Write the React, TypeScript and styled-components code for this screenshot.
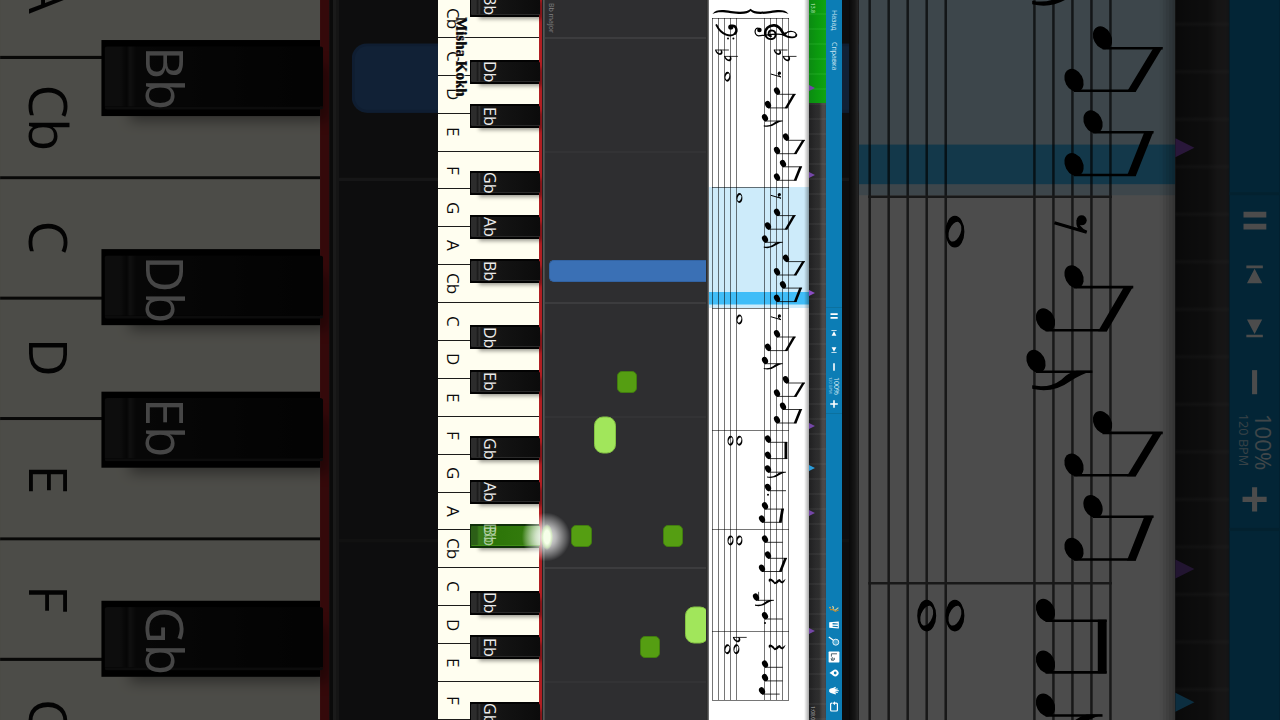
import React from "react";
import styled, { createGlobalStyle, css } from "styled-components";

const GlobalStyle = createGlobalStyle`
  * { box-sizing: border-box; }
  body { margin: 0; background: #000; }
  button { appearance: none; border: 0; margin: 0; padding: 0; background: none; color: inherit; font: inherit; }
`;

const UI_FONT = '"Open Sans", "Noto Sans", sans-serif';
const WHITE_KEYS = ["Cb", "C", "D", "E", "F", "G", "A", "Cb", "C", "D", "E", "F", "G", "A", "Cb", "C", "D", "E", "F"];

/* Distance from the top edge, counted in white keys. */
const BLACK_KEYS: { label: string; at: number; pressed?: boolean }[] = [
  { label: "Bb", at: 0.13 },
  { label: "Db", at: 1.9 },
  { label: "Eb", at: 3.07 },
  { label: "Gb", at: 4.83 },
  { label: "Ab", at: 5.99 },
  { label: "Bb", at: 7.15 },
  { label: "Db", at: 8.9 },
  { label: "Eb", at: 10.07 },
  { label: "Gb", at: 11.83 },
  { label: "Ab", at: 12.99 },
  { label: "Bb", at: 14.15, pressed: true },
  { label: "Db", at: 15.9 },
  { label: "Eb", at: 17.07 },
  { label: "Gb", at: 18.83 },
];

const keyTop = (at: number) => `${(at / 19) * 100}%`;

const Page = styled.main`
  position: relative;
  height: 100vh;
  overflow: hidden;
  display: flex;
  justify-content: center;
  font-family: ${UI_FONT};
`;

const Backdrop = styled.div`
  position: absolute;
  inset: 0;
  display: flex;
  justify-content: center;
  transform: scale(3.168);
`;

const Shade = styled.div`
  position: absolute;
  inset: 0;
  background: rgba(0, 0, 0, 0.7);
`;

const Video = styled.div`
  position: relative;
  height: 100%;
`;

const SceneRow = styled.div`
  height: 100%;
  aspect-ratio: 404 / 720;
  display: flex;
  overflow: hidden;
`;

const Keyboard = styled.div`
  position: relative;
  flex: 0 0 104px;
  display: flex;
  flex-direction: column;
  background: #fffef0;
  border-right: 3px solid #b01e22;
`;

const WhiteKey = styled.button`
  flex: 1 1 0;
  min-height: 0;
  display: flex;
  align-items: center;
  padding-left: 3px;
  background: #fffef0;
  border-bottom: 1px solid #1c1c1a;
  color: #0c0c0c;
`;

const KeyLabel = styled.span<{ $small?: boolean }>`
  position: relative;
  writing-mode: vertical-rl;
  font-family: ${UI_FONT};
  font-size: ${(p) => (p.$small ? 16 : 17)}px;
  line-height: 24px;
`;

const BlackKey = styled.button<{ $at: number; $pressed?: boolean }>`
  position: absolute;
  left: 32px;
  top: ${(p) => keyTop(p.$at)};
  width: 69px;
  height: 24px;
  transform: translateY(-50%);
  display: flex;
  align-items: center;
  padding-left: 8px;
  background: #030303;
  color: #ececec;
  box-shadow: 6px 5px 4px -3px rgba(0, 0, 0, 0.4);

  &::before {
    content: "";
    position: absolute;
    inset: 2px -1px 2px 1px;
    border-radius: 1px;
    border-bottom: 1px solid #2a2a2a;
    background: linear-gradient(90deg, #2c2c2c 0 5px, #151515 7px, #363636 8px, #191919 10px, #131313 45%, #0b0b0b);
  }

  ${(p) =>
    p.$pressed &&
    css`
      background: #10300a;
      color: rgba(205, 225, 195, 0.8);
      text-shadow: -3px 0 0 rgba(190, 215, 180, 0.7);
      &::before {
        border-bottom-color: #3f8d16;
        background: linear-gradient(90deg, #2c5f17 0 6px, #3a7c1c 8px, #2c7408 30%, #327a0c 75%, #8fbd78);
      }
    `}
`;

const Roll = styled.div`
  position: relative;
  flex: 1 1 auto;
  overflow: hidden;
  background:
    linear-gradient(90deg, #222 0 1px, #575757 1px 2px, #484848 2px 3px, transparent 3px),
    #2e2e30;
`;

const RollLine = styled.div<{ $at: number; $strong?: boolean }>`
  position: absolute;
  left: 3px;
  right: 3px;
  top: ${(p) => keyTop(p.$at)};
  height: 1px;
  transform: translateY(-50%);
  background: ${(p) => (p.$strong ? "#4b4b4d" : "#39393b")};
`;

const FallingNote = styled.div<{ $left: number; $at: number; $w: number; $h: number; $kind: "green" | "lime" | "blue" }>`
  position: absolute;
  left: ${(p) => p.$left}px;
  top: ${(p) => keyTop(p.$at)};
  width: ${(p) => p.$w}px;
  height: ${(p) => p.$h}px;
  transform: translateY(-50%);
  border-radius: ${(p) => (p.$kind === "lime" ? 9 : 5)}px;
  background: ${(p) => ({ green: "#559e12", lime: "#a1e65b", blue: "#3a70b5" })[p.$kind]};
  border: 1px solid ${(p) => ({ green: "#417c10", lime: "#84c244", blue: "#3263a3" })[p.$kind]};
  ${(p) => p.$kind === "blue" && "border-top-right-radius: 0; border-bottom-right-radius: 0; border-right: 0;"}
`;

const RollEdge = styled.div`
  position: absolute;
  top: 0;
  bottom: 0;
  right: 0;
  width: 3px;
  background: linear-gradient(90deg, #1e1e1e, #4b4b4b 60%, #858585);
`;

const KeySignature = styled.span`
  position: absolute;
  left: 4px;
  top: 3px;
  writing-mode: vertical-rl;
  font-size: 7px;
  line-height: 10px;
  color: #808082;
`;

const Glow = styled.div`
  position: absolute;
  left: 84px;
  top: ${keyTop(14.16)};
  width: 48px;
  height: 48px;
  transform: translateY(-50%);
  background:
    radial-gradient(ellipse 6px 13px at 25px 24px, #f6ffe9 0 50%, rgba(215, 245, 190, 0.7) 80%, transparent),
    radial-gradient(circle, rgba(255, 255, 255, 0.95) 0, rgba(255, 255, 255, 0.65) 30%, rgba(255, 255, 255, 0.2) 60%, transparent 72%);
`;

const SheetPane = styled.div`
  flex: 0 0 100px;
  overflow: hidden;
  background: #fff;
  svg { display: block; width: 100%; height: 100%; }
`;

const Timeline = styled.div`
  position: relative;
  flex: 0 0 17px;
  background:
    repeating-linear-gradient(180deg, transparent 0 13px, rgba(150, 150, 150, 0.16) 14px, transparent 15px),
    linear-gradient(90deg, #202021, #2b2b2c 40%, #2e2e2e 60%, #484647 78%, #4c4a4b 94%, #38424a);
`;

const Played = styled.div`
  height: 14.3%;
  padding: 3px 0 0 1px;
  background:
    repeating-linear-gradient(180deg, transparent 0 13px, rgba(90, 220, 90, 0.25) 14px, transparent 15px),
    linear-gradient(90deg, #0b8a12, #0b9a0e 50%, #10a315);
`;

const Clock = styled.span<{ $end?: boolean }>`
  display: block;
  writing-mode: vertical-rl;
  font-size: 5px;
  line-height: 6px;
  color: ${(p) => (p.$end ? "#b4b4b4" : "#d2f6d2")};
  ${(p) => p.$end && "position: absolute; left: 1px; bottom: 0;"}
`;

const Marker = styled.div<{ $y: number; $color: string }>`
  position: absolute;
  left: 0;
  top: ${(p) => (p.$y / 720) * 100}%;
  transform: translateY(-50%);
  border-left: 6px solid ${(p) => p.$color};
  border-top: 3px solid transparent;
  border-bottom: 3px solid transparent;
`;

const Toolbar = styled.nav`
  flex: 0 0 16px;
  display: grid;
  grid-template-rows: 1fr auto 1fr;
  background: #0c7db5;
  color: #fff;
`;

const ToolGroup = styled.div<{ $end?: boolean }>`
  display: flex;
  flex-direction: column;
  align-items: center;
  ${(p) => p.$end && "justify-content: flex-end; padding-bottom: 5px;"}
`;

const MenuGroup = styled(ToolGroup)`
  padding-top: 10px;
  gap: 12px;
`;

const MenuButton = styled.button`
  writing-mode: vertical-rl;
  font-family: ${UI_FONT};
  font-size: 7px;
  line-height: 14px;
  color: #cde6f2;
`;

const TransportGroup = styled(ToolGroup)`
  border-top: 1px solid #0b719f;
  border-bottom: 1px solid #0b719f;
`;

const ToolButton = styled.button<{ $tall?: boolean; $gap?: boolean }>`
  width: 16px;
  height: ${(p) => (p.$tall ? 17 : 16)}px;
  margin-top: ${(p) => (p.$gap ? 2 : 0)}px;
  display: flex;
  align-items: center;
  justify-content: center;
  svg { display: block; overflow: visible; }
`;

const Tempo = styled.div`
  height: 20px;
  writing-mode: vertical-rl;
  text-align: center;
`;

const TempoPercent = styled.div`
  font-size: 7px;
  line-height: 7px;
  color: #d5eaf4;
`;

const TempoBpm = styled.div`
  font-size: 4px;
  line-height: 5px;
  color: #b9dbea;
`;

const Watermark = styled.div`
  position: absolute;
  left: 14px;
  top: 17px;
  writing-mode: vertical-rl;
  font-family: "Liberation Serif", serif;
  font-weight: 700;
  font-size: 15px;
  line-height: 20px;
  color: #0c0c0c;
  text-shadow: 0 1px 0 #0c0c0c, 0 0 2px #fffef0, 0 0 2px #fffef0, 1px 0 2px #fffef0;
`;

/* ---- Notation ---- */

const Head = ({ x, y, to }: { x: number; y: number; to: number }) => (
  <>
    <ellipse cx={x} cy={y} rx="2.8" ry="3.8" transform={`rotate(-28 ${x} ${y})`} />
    <path d={`M${x} ${y + 3.3}H${to}`} stroke="#000" strokeWidth="0.8" />
  </>
);

const Pair = ({ a, b }: { a: [number, number, number]; b: [number, number, number] }) => (
  <>
    <Head x={a[0]} y={a[1]} to={a[2]} />
    <Head x={b[0]} y={b[1]} to={b[2]} />
    <path d={`M${a[2] - 2.8} ${a[1] + 3}H${a[2]}L${b[2]} ${b[1] + 3.6}H${b[2] - 2.8}Z`} />
  </>
);

const Flagged = ({ x, y, to }: { x: number; y: number; to: number }) => (
  <>
    <Head x={x} y={y} to={to} />
    <path
      transform={`translate(${to} ${y + 3.3})`}
      d="M0 -.3Q-4 1 -7 3Q-12.5 7 -19 5.4V4.3Q-13.5 5.3 -9.8 2.5Q-7.5 .2 -5 -.3Z"
    />
  </>
);

const Whole = ({ x, y }: { x: number; y: number }) => (
  <path
    transform={`translate(${x} ${y})`}
    fillRule="evenodd"
    d="M0 -5A3 5 0 0 1 0 5A3 5 0 0 1 0 -5ZM1.1 -3.1A2 3.3 20 0 1 -1.1 3.1A2 3.3 20 0 1 1.1 -3.1Z"
  />
);

const Flat = ({ x, y }: { x: number; y: number }) => (
  <>
    <path transform={`translate(${x} ${y})`} stroke="#000" strokeWidth="0.8" d="M0 0H13.5" />
    <path
      transform={`translate(${x} ${y})`}
      fillRule="evenodd"
      d="M-.4 -.3C.4 3.2 3 5.4 5.4 4.8C7.8 4.2 7.4 1.2 6 -.3H4.8C5.8 1.2 5.8 2.8 4.6 3.2C3.2 3.4 1.6 2 .8 -.3Z"
    />
  </>
);

const EighthRest = ({ y }: { y: number }) => (
  <>
    <circle cx="70.4" cy={y} r="1.6" />
    <path fill="none" stroke="#000" strokeWidth="1" d={`M61.8 ${y + 0.8}L72 ${y + 3.8}Q68.6 ${y + 2.4} 69.4 ${y}`} />
  </>
);

const QuarterRest = ({ y }: { y: number }) => (
  <path
    transform={`translate(59.7 ${y})`}
    d="M17 -1.8L13.4 1Q12.2 .2 11.2 -1.6L9 -.8Q8.4 .6 6.2 1.6Q5.4 0 3 -1.6Q1 -2.6 0 -1.2Q-.4 .4 .8 1.8Q.8 -.2 2.4 .4Q4.4 1.6 6 3.6Q9.4 3 10.4 1Q12 2.6 13.6 3Q15.6 2 17 -1.8Z"
  />
);

const Phrase = ({ dy }: { dy: number }) => (
  <g transform={`translate(0 ${dy})`}>
    <EighthRest y={73.2} />
    <Pair a={[68, 91, 86.7]} b={[59, 104.6, 78.4]} />
    <Flagged x={56} y={117.7} to={73.8} />
    <Pair a={[77, 137, 96]} b={[68, 150.4, 87.5]} />
    <Pair a={[74, 163.5, 93.1]} b={[68, 177, 87.5]} />
  </g>
);

const Score = () => (
  <svg viewBox="0 0 100 720" role="img" aria-label="Sheet music">
    <rect x="0" y="187" width="100" height="121" fill="#cdebfa" />
    <rect x="0" y="292" width="100" height="12.5" fill="#40bdf8" />
    <path
      d={
        [3.5, 9.5, 15.5, 21.5, 27.5, 55.5, 61.5, 67.5, 73.5, 79.5].map((x) => `M${x} 18V700`).join("") +
        [18.5, 187.5, 308.5, 430.5, 529.5, 631.5, 700.5].map((y) => `M3 ${y}H80`).join("")
      }
      stroke="#000"
      strokeOpacity="0.68"
      strokeWidth="0.8"
      fill="none"
    />
    <path d="M3.5 14C7 9.3 13 9.6 22 11C32 12.4 39 11.8 41.6 8.8C44 11.8 51 12.4 61 11C70 9.6 76 9.3 79.5 14C75 11.6 70 11.8 61 13.2C50 14.6 44 14 41.6 11C39 14 33 14.6 22 13.2C13 11.8 8 11.6 3.5 14Z" />

    <g fill="none" stroke="#000" strokeLinecap="round">
      <path strokeWidth="1.2" d="M50.4 28.6C45.4 26 44.4 35 49.4 35.8C56 35.4 68 32.8 74 34.6" />
      <path strokeWidth="1.8" d="M74 34.6C80 38 87 38.4 87.4 35" />
      <path strokeWidth="1.2" d="M87.4 35C87 31 80 30.2 76.4 33.6" />
      <path strokeWidth="2.6" d="M76.4 33.6C73 36.4 73.6 26 65.4 25.4C59.6 25 56 29 56.2 33.6" />
      <path strokeWidth="1.9" d="M56.2 33.6C56.6 38 60 39.6 63 39C68 38 67.6 30.6 62.6 30.4C58.8 30.8 58.6 35.6 62 36.2" />
      <path strokeWidth="2.4" d="M23 25.8C27.2 25.4 28.8 30.6 26 33.6" />
      <path strokeWidth="1.8" d="M26 33.6C22 37.4 12.4 35.4 7.4 25" />
    </g>
    <circle cx="50.4" cy="30" r="2.3" />
    <circle cx="21.8" cy="27" r="2.6" />
    <circle cx="19" cy="38.6" r="1" />
    <circle cx="24.4" cy="38.6" r="1" />
    <Flat x={65} y={50} />
    <Flat x={74} y={56.4} />
    <Flat x={6.4} y={50} />
    <Flat x={15.4} y={56.4} />
    <Whole x={18.4} y={76.7} />
    <Phrase dy={0} />
    <Whole x={30.4} y={198} />
    <Phrase dy={121.3} />
    <Whole x={30.4} y={319.5} />
    <Phrase dy={242.7} />

    <Whole x={21.5} y={440.7} />
    <Whole x={30.4} y={440.7} />
    <Pair a={[59, 439, 78.3]} b={[59, 455.3, 78.3]} />
    <Flagged x={59} y={468.9} to={77} />
    <Head x={59} y={487.4} to={77} />
    <circle cx="59" cy="494.7" r="1" />
    <Pair a={[56, 505.8, 75]} b={[53, 519, 72.7]} />

    <Whole x={21.5} y={540.4} />
    <Whole x={30.4} y={540.4} />
    <Head x={56} y={539} to={73.7} />
    <Pair a={[59, 555, 78]} b={[53, 568.2, 72.7]} />
    <QuarterRest y={580.6} />
    <path d="M49.6 591.8V601" stroke="#000" strokeWidth="0.7" />
    <Flagged x={47} y={597} to={65} />
    <Head x={56} y={615.7} to={73.7} />
    <circle cx="56" cy="623" r="1" />

    <Flat x={24.2} y={637.4} />
    <Whole x={18.4} y={649.2} />
    <Whole x={27.4} y={649.2} />
    <QuarterRest y={646.6} />
    <Head x={56} y={664} to={73.7} />
    <Head x={56} y={677.6} to={73.7} />
    <Head x={53} y={690.8} to={70.7} />
    {[95, 96, 97, 98, 99].map((x, i) => (
      <rect key={x} x={x} y="0" width="1" height="720" fill="#000" fillOpacity={0.03 + i * 0.07} />
    ))}
  </svg>
);

/* ---- Toolbar icons, drawn on an 8 or 10 unit square ---- */

const Glyph = ({ size = 8, children }: { size?: number; children: React.ReactNode }) => (
  <svg width={size} height={size} viewBox={`0 0 ${size} ${size}`} fill="currentColor" aria-hidden="true">
    {children}
  </svg>
);

const transport = [
  { name: "Pause", d: "M.5 1.2H7.7V3H.5ZM.5 5H7.7V6.8H.5Z" },
  { name: "Previous", d: "M1.4 1.2H6.6V2H1.4ZM4 2.2L6.4 6.8H1.6Z" },
  { name: "Next", d: "M1.4 6H6.6V6.8H1.4ZM4 5.8L6.4 1.2H1.6Z" },
  { name: "Slower", d: "M3.2 .2H4.8V7.8H3.2Z" },
];

const Tools = () => (
  <ToolGroup $end>
    <ToolButton type="button" aria-label="Colours">
      <Glyph size={10}>
        <path d="M3.4 2.2L4.4 3.4L4 5.6L6 6.4L9.4 3.6" fill="none" stroke="#d8cf9a" strokeWidth="1.2" />
        <path d="M1 5.6H4L6.2 7.4L9.6 6" fill="none" stroke="#b98a35" strokeWidth="1.1" />
        <circle cx="1" cy="3.6" r="0.9" fill="#e8a13a" />
      </Glyph>
    </ToolButton>
    <ToolButton type="button" aria-label="Keyboard">
      <Glyph size={10}>
        <path fillRule="evenodd" d="M.2 2.2L9.8 1.6V8.4L.2 7.8ZM3.6 3L8.8 3.6V4.6L3.6 4.4ZM3.6 5.8L8.8 6V7.2L3.6 6.8Z" />
      </Glyph>
    </ToolButton>
    <ToolButton type="button" aria-label="Zoom">
      <Glyph size={10}>
        <circle cx="6.8" cy="6.2" r="3" fill="#49a5d0" stroke="#e5f3fa" />
        <path d="M4.4 4.2L-.2 1" stroke="#fff" strokeWidth="1.3" />
      </Glyph>
    </ToolButton>
    <ToolButton type="button" aria-label="Note names">
      <Glyph size={10}>
        <rect x="-.4" y="-.4" width="10.8" height="10.8" rx="0.6" fill="#fff" />
        <path d="M8 1.8H2.4V4.6M5.2 5.8Q6 8 4.8 8.2H2.4M4 8.2Q4.4 5.4 3 5.6Q1.8 6 2.6 8.2" fill="none" stroke="#3b5360" strokeWidth="0.9" />
      </Glyph>
    </ToolButton>
    <ToolButton type="button" aria-label="Marker">
      <Glyph size={10}>
        <path fillRule="evenodd" d="M.4 5Q3 3.6 4 2.6A3.3 3.3 0 1 1 4 7.4Q3 6.4 .4 5ZM4.8 5A1.4 1.4 0 1 0 7.6 5A1.4 1.4 0 1 0 4.8 5Z" />
      </Glyph>
    </ToolButton>
    <ToolButton type="button" aria-label="Hands" $gap>
      <Glyph size={10}>
        <path d="M.2 3.6Q1.4 1.8 4 2L6.4 .8L7 1.6L5.4 2.8L8.8 2.4V3.4L5.8 4L9.8 4.2V5.2L5.8 5.2L9 6.2L8.7 7L5.3 6.4L7.2 7.8L6.6 8.4L3.4 7.4Q.8 7 .2 5.8Z" />
      </Glyph>
    </ToolButton>
    <ToolButton type="button" aria-label="Loop">
      <Glyph size={10}>
        <path d="M3.4 1.2H2.6Q1.6 1.2 1.6 2.2V8Q1.6 9 2.6 9H7.4Q8.4 9 8.4 8V2.2Q8.4 1.2 7.4 1.2H5.6" fill="none" stroke="#fff" strokeWidth="1.2" />
        <path d="M6 -.8V3.2L3.6 1.2Z" />
      </Glyph>
    </ToolButton>
  </ToolGroup>
);

const markers: [number, string][] = [
  [88, "#7446a6"],
  [175, "#7446a6"],
  [293, "#8b4dc4"],
  [426, "#7446a6"],
  [468, "#2a9bd8"],
  [513, "#7446a6"],
  [631, "#7446a6"],
];

const Scene = () => (
  <SceneRow>
    <Keyboard>
      {WHITE_KEYS.map((label, i) => (
        <WhiteKey type="button" key={i}>
          <KeyLabel>{label}</KeyLabel>
        </WhiteKey>
      ))}
      {BLACK_KEYS.map((k) => (
        <BlackKey type="button" key={k.at} $at={k.at} $pressed={k.pressed}>
          <KeyLabel $small>{k.label}</KeyLabel>
        </BlackKey>
      ))}
    </Keyboard>
    <Roll>
      {[1, 4, 8, 11, 15, 18].map((at, i) => (
        <RollLine key={at} $at={at} $strong={i % 2 === 0} />
      ))}
      <KeySignature>Bb major</KeySignature>
      <FallingNote $kind="blue" $left={7} $at={7.16} $w={160} $h={22} />
      <FallingNote $kind="green" $left={75} $at={10.09} $w={20} $h={22} />
      <FallingNote $kind="lime" $left={52} $at={11.49} $w={22} $h={37} />
      <FallingNote $kind="green" $left={29} $at={14.15} $w={21} $h={22} />
      <FallingNote $kind="green" $left={121} $at={14.15} $w={20} $h={22} />
      <FallingNote $kind="lime" $left={143} $at={16.49} $w={24} $h={37} />
      <FallingNote $kind="green" $left={98} $at={17.08} $w={20} $h={22} />
      <RollEdge />
    </Roll>
    <SheetPane>
      <Score />
    </SheetPane>
    <Timeline>
      <Played>
        <Clock>13.8</Clock>
      </Played>
      {markers.map(([y, color]) => (
        <Marker key={y} $y={y} $color={color} />
      ))}
      <Clock $end>1:08.0</Clock>
    </Timeline>
    <Toolbar>
      <MenuGroup>
        <MenuButton type="button">Назад</MenuButton>
        <MenuButton type="button">Справка</MenuButton>
      </MenuGroup>
      <TransportGroup>
        {transport.map((t) => (
          <ToolButton type="button" key={t.name} aria-label={t.name} $tall>
            <Glyph>
              <path d={t.d} />
            </Glyph>
          </ToolButton>
        ))}
        <Tempo>
          <TempoPercent>100%</TempoPercent>
          <TempoBpm>120 BPM</TempoBpm>
        </Tempo>
        <ToolButton type="button" aria-label="Faster" $tall>
          <Glyph>
            <path d="M3.2 .2H4.8V3.2H7.8V4.8H4.8V7.8H3.2V4.8H.2V3.2H3.2Z" />
          </Glyph>
        </ToolButton>
      </TransportGroup>
      <Tools />
    </Toolbar>
  </SceneRow>
);

export default function App() {
  return (
    <Page>
      <GlobalStyle />
      <Backdrop inert aria-hidden="true">
        <Scene />
      </Backdrop>
      <Shade />
      <Video>
        <Scene />
        <Glow />
        <Watermark>Misha Kokh</Watermark>
      </Video>
    </Page>
  );
}
